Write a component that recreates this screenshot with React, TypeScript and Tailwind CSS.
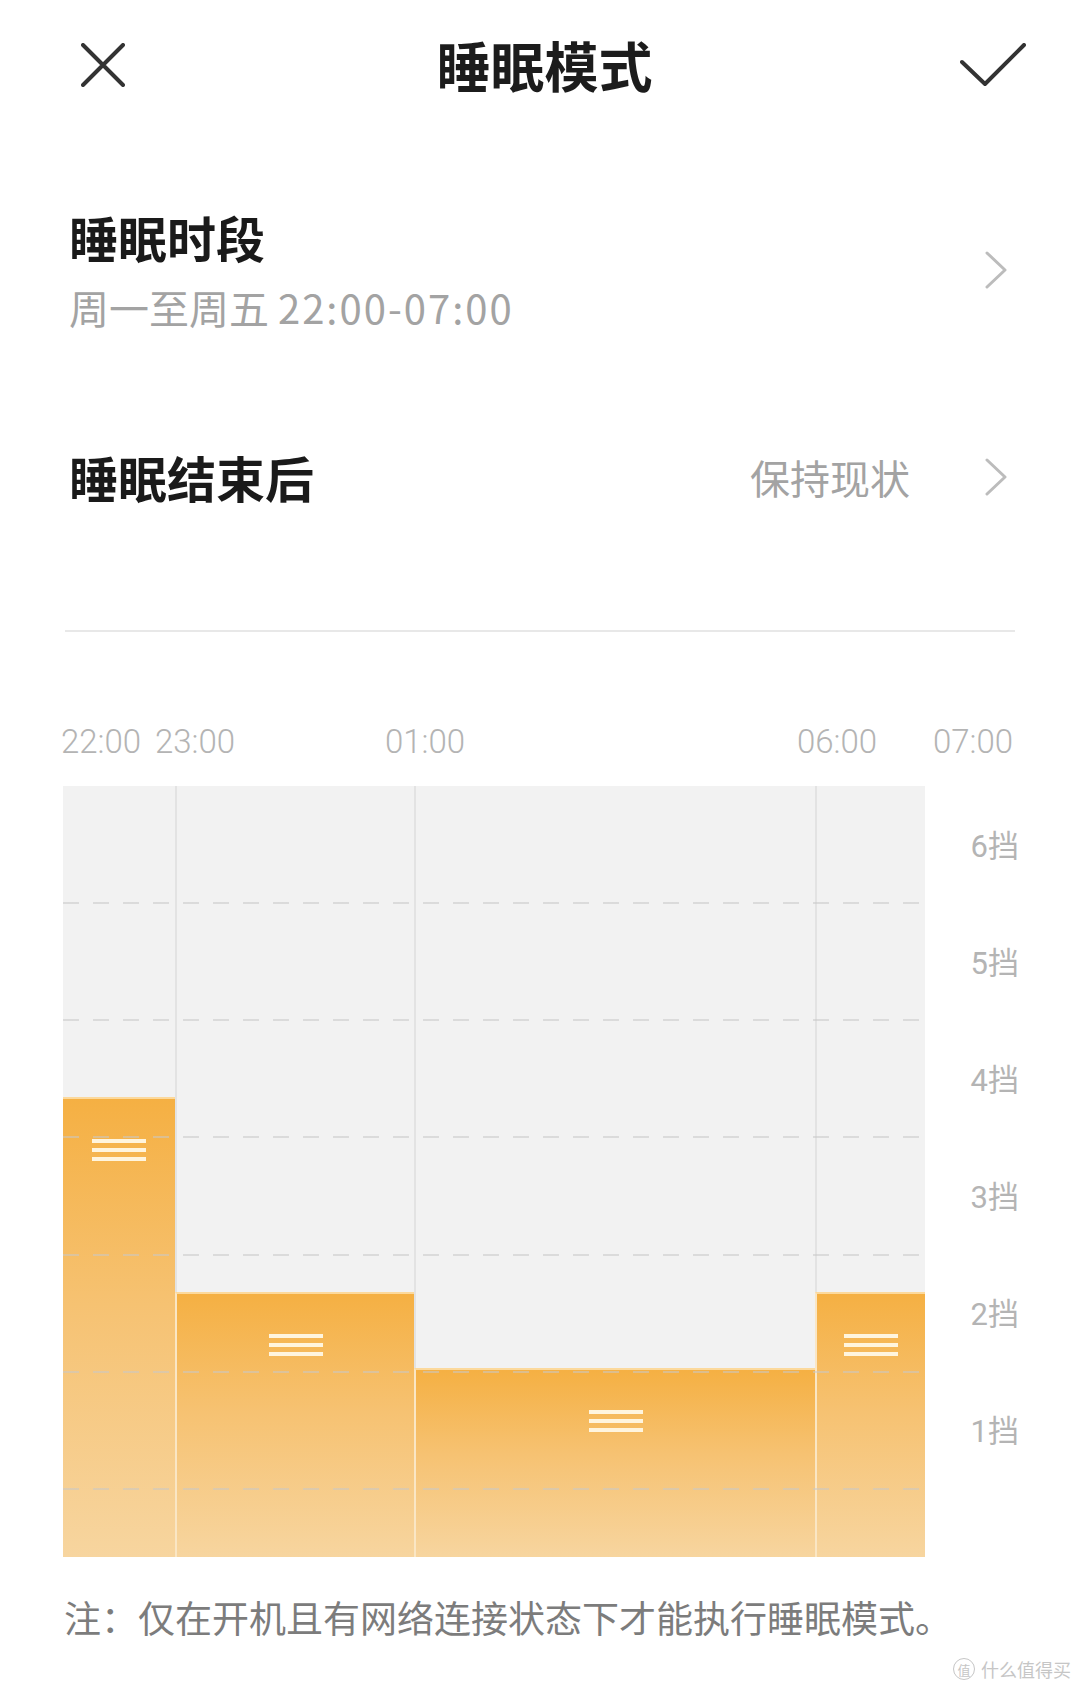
import React from 'react'

type Bar = { width: string; bar: string; edge: boolean }

const COLUMNS: Bar[] = [
  { width: 'w-[112px]', bar: 'h-[460px]', edge: false },
  { width: 'w-[239px]', bar: 'h-[265px]', edge: true },
  { width: 'w-[401px]', bar: 'h-[189px]', edge: true },
  { width: 'w-[110px]', bar: 'h-[265px]', edge: true },
]

const TIMES = [
  { label: '22:00', left: 'left-[61px]' },
  { label: '23:00', left: 'left-[155px]' },
  { label: '01:00', left: 'left-[385px]' },
  { label: '06:00', left: 'left-[797px]' },
  { label: '07:00', left: 'left-[933px]' },
]

const GRID_LINES = ['top-[116px]', 'top-[233px]', 'top-[350px]', 'top-[468px]', 'top-[585px]', 'top-[702px]']

const LEVELS = ['6挡', '5挡', '4挡', '3挡', '2挡', '1挡']

const Chevron = () => (
  <svg width="24" height="38" viewBox="0 0 24 38" fill="none">
    <polyline points="3,2 21,19 3,36" stroke="#bcbcbc" strokeWidth="3" strokeLinejoin="round" strokeLinecap="round" />
  </svg>
)

const Handle = () => (
  <div className="flex flex-col gap-[5px] w-[54px]">
    <div className="h-[4px] bg-[#fff5de]" />
    <div className="h-[4px] bg-[#fff5de]" />
    <div className="h-[4px] bg-[#fff5de]" />
  </div>
)

const App: React.FC = () => {
  return (
    <div className="w-[1080px] h-[1693px] bg-white overflow-hidden font-['Noto_Sans_CJK_SC',sans-serif]">
      {/* Header */}
      <div className="h-[130px] flex items-center justify-between pl-[81px] pr-[54px]">
        <svg width="44" height="44" viewBox="0 0 44 44" fill="none">
          <path d="M2 2 L42 42 M42 2 L2 42" stroke="#333" strokeWidth="4" strokeLinecap="round" />
        </svg>
        <h1 className="text-[54px] leading-none font-bold text-[#1c1c1c] ml-[4px]">睡眠模式</h1>
        <svg width="66" height="44" viewBox="0 0 66 44" fill="none">
          <polyline points="2,19 25,41 64,2" stroke="#333" strokeWidth="4" strokeLinecap="round" strokeLinejoin="round" />
        </svg>
      </div>

      {/* Sleep period */}
      <div className="mt-[82px] pl-[69px] pr-[72px] flex items-center justify-between">
        <div className="flex flex-col">
          <div className="text-[49px] leading-none font-bold text-[#1a1a1a]">睡眠时段</div>
          <div className="mt-[26px] text-[40px] leading-none text-[#a3a3a3]">
            周一至周五 <span className="tracking-[2px]">22:00-07:00</span>
          </div>
        </div>
        <Chevron />
      </div>

      {/* After sleep */}
      <div className="mt-[125px] pl-[69px] pr-[72px] flex items-center justify-between">
        <div className="text-[49px] leading-none font-bold text-[#1a1a1a]">睡眠结束后</div>
        <div className="flex items-center gap-[74px]">
          <span className="text-[40px] leading-none text-[#a3a3a3]">保持现状</span>
          <Chevron />
        </div>
      </div>

      <div className="mt-[129px] mx-[65px] h-[2px] bg-[#e8e8e8]" />

      {/* Time axis */}
      <div className="relative mt-[93px] h-[33px] font-['Roboto',sans-serif] text-[33px] leading-none text-[#b4b4b4] font-light">
        {TIMES.map((t) => (
          <span key={t.label} className={`absolute top-0 ${t.left}`}>
            {t.label}
          </span>
        ))}
      </div>

      {/* Chart */}
      <div className="mt-[28px] ml-[63px] flex">
        <div className="relative flex h-[771px] w-[862px]">
          {COLUMNS.map((c, i) => (
            <div key={i} className={`flex flex-col ${c.width}`}>
              <div className={`flex-1 bg-[#f2f2f2] ${c.edge ? 'border-l-2 border-[#e3e3e3]' : ''}`} />
              <div
                className={`${c.bar} flex justify-center pt-[40px] border-t-2 border-[#fcd99c] bg-[linear-gradient(180deg,#f5b043_0%,#f6c272_45%,#f7d59f_100%)] ${
                  c.edge ? 'border-l-2 border-l-[#fae6c4]' : ''
                }`}
              >
                <Handle />
              </div>
            </div>
          ))}
          {GRID_LINES.map((g) => (
            <div
              key={g}
              className={`absolute left-0 right-0 h-[2px] ${g} bg-[repeating-linear-gradient(90deg,rgba(200,200,200,0.55)_0px,rgba(200,200,200,0.55)_16px,transparent_16px,transparent_30px)]`}
            />
          ))}
        </div>
        <div className="w-[94px] flex flex-col font-['Roboto','Noto_Sans_CJK_SC',sans-serif] text-[31px] leading-none text-[#b4b4b4]">
          {LEVELS.map((l) => (
            <div key={l} className="h-[117px] flex items-center justify-end pt-[3px]">
              {l}
            </div>
          ))}
        </div>
      </div>

      {/* Note */}
      <div className="mt-[42px] pl-[64px] text-[37px] leading-none text-[#7c7c7c]">
        注：仅在开机且有网络连接状态下才能执行睡眠模式。
      </div>

      {/* Watermark */}
      <div className="mt-[22px] pr-[9px] flex justify-end items-center gap-[6px] text-[#c6c6c6]">
        <div className="w-[22px] h-[22px] rounded-full border-[1.5px] border-[#c6c6c6] flex items-center justify-center text-[13px] leading-none">
          值
        </div>
        <span className="text-[18px] leading-none">什么值得买</span>
      </div>
    </div>
  )
}

export default App
